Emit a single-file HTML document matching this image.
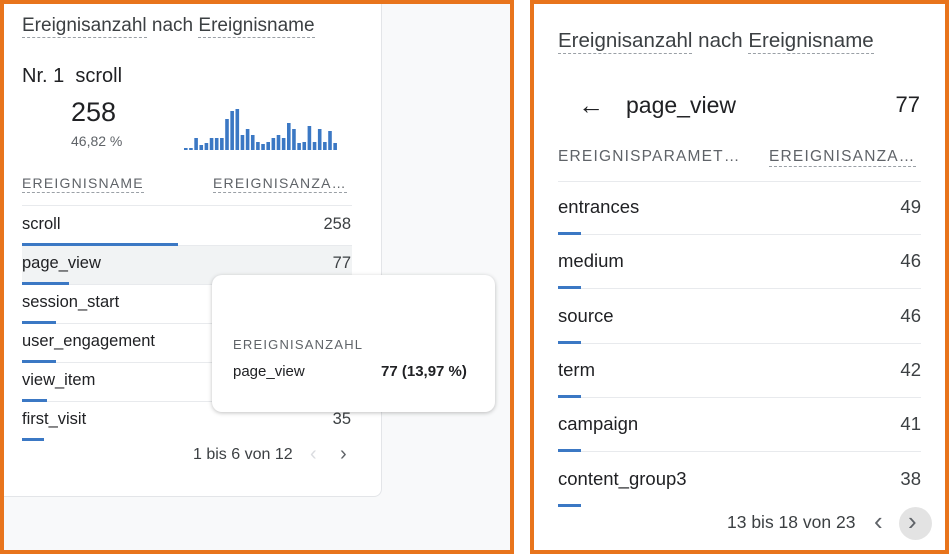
<!DOCTYPE html><html><head><style>
*{margin:0;padding:0;box-sizing:border-box}
body{width:949px;height:554px;background:#fff;font-family:"Liberation Sans",sans-serif;color:#202124;position:relative;overflow:hidden}
.a{position:absolute;white-space:nowrap}
.dash{border-bottom:1px dashed #9aa0a6;padding-bottom:1px}
.hd{font-size:14px;letter-spacing:1.2px;color:#5f6368}
.r{font-size:16.5px;color:#202124}
.n{font-size:16.5px;color:#3c4043;text-align:right}
.bar{position:absolute;height:3px;background:#3b78c4;z-index:2}
.sep{position:absolute;height:1px;background:#e8eaed}
</style></head><body>
<div class="a" style="left:0;top:0;width:514px;height:554px;background:#f8f9fa;border:4px solid #e8741c"></div>
<div class="a" style="left:4px;top:4px;width:378px;height:493px;background:#fff;border:1px solid #e3e5e8;border-top:none;border-left:none;border-radius:0 0 8px 0"></div>
<div class="a" style="left:22px;top:15px;font-size:19px;color:#3c4043"><span class="dash">Ereignisanzahl</span> nach <span class="dash">Ereignisname</span></div>
<div class="a" style="left:22px;top:65px;font-size:20px">Nr. 1&nbsp; scroll</div>
<div class="a" style="left:71px;top:97px;font-size:27px">258</div>
<div class="a" style="left:71px;top:133px;font-size:14px;color:#5f6368">46,82 %</div>
<svg class="a" style="left:184px;top:100px" width="156" height="52" id="sp"></svg>
<div class="a hd" style="left:22px;top:175px"><span class="dash">EREIGNISNAME</span></div>
<div class="a hd" style="left:213px;top:175px"><span class="dash">EREIGNISANZA…</span></div>
<div class="sep" style="left:22px;top:205px;width:330px"></div>
<div class="a" style="left:22px;top:245px;width:330px;height:39px;background:#f1f3f4"></div>
<div class="a r" style="left:22px;top:215px">scroll</div><div class="a n" style="left:300px;top:215px;width:51px">258</div><div class="bar" style="left:22px;top:243px;width:156px"></div>
<div class="sep" style="left:22px;top:245px;width:330px"></div>
<div class="a r" style="left:22px;top:254px">page_view</div><div class="a n" style="left:300px;top:254px;width:51px">77</div><div class="bar" style="left:22px;top:282px;width:47px"></div>
<div class="sep" style="left:22px;top:284px;width:330px"></div>
<div class="a r" style="left:22px;top:293px">session_start</div><div class="bar" style="left:22px;top:321px;width:34px"></div>
<div class="sep" style="left:22px;top:323px;width:330px"></div>
<div class="a r" style="left:22px;top:332px">user_engagement</div><div class="bar" style="left:22px;top:360px;width:34px"></div>
<div class="sep" style="left:22px;top:362px;width:330px"></div>
<div class="a r" style="left:22px;top:371px">view_item</div><div class="bar" style="left:22px;top:399px;width:25px"></div>
<div class="sep" style="left:22px;top:401px;width:330px"></div>
<div class="a r" style="left:22px;top:410px">first_visit</div><div class="a n" style="left:300px;top:410px;width:51px">35</div><div class="bar" style="left:22px;top:438px;width:22px"></div>
<div class="a" style="left:193px;top:446px;font-size:16px;color:#3c4043">1 bis 6 von 12</div>
<div class="a" style="left:310px;top:443px;font-size:20px;color:#dadce0">&#8249;</div>
<div class="a" style="left:340px;top:443px;font-size:20px;color:#5f6368">&#8250;</div>
<div class="a" style="left:212px;top:275px;width:283px;height:137px;background:#fff;border-radius:10px;box-shadow:0 1px 4px rgba(0,0,0,.25);z-index:3"></div>
<div class="a hd" style="left:233px;top:337px;font-size:13px;z-index:4">EREIGNISANZAHL</div>
<div class="a" style="left:233px;top:363px;font-size:15px;z-index:4">page_view</div>
<div class="a" style="left:381px;top:363px;font-size:15px;font-weight:bold;z-index:4">77 (13,97 %)</div>
<div class="a" style="left:530px;top:0;width:419px;height:554px;border:4px solid #e8741c"></div>
<div class="a" style="left:558px;top:29px;font-size:20.5px;color:#3c4043"><span class="dash">Ereignisanzahl</span> nach <span class="dash">Ereignisname</span></div>
<div class="a" style="left:578px;top:90px;font-size:26px;line-height:30px">&#8592;</div>
<div class="a" style="left:626px;top:92px;font-size:23px">page_view</div>
<div class="a" style="left:870px;top:92px;font-size:22px;width:50px;text-align:right">77</div>
<div class="a hd" style="left:558px;top:148px;font-size:15.5px">EREIGNISPARAMET…</div>
<div class="a hd" style="left:769px;top:148px;font-size:15.5px"><span class="dash">EREIGNISANZA…</span></div>
<div class="sep" style="left:558px;top:181px;width:363px"></div>
<div id="rr"></div>
<div class="a" style="left:727px;top:512px;font-size:17.5px;color:#3c4043">13 bis 18 von 23</div>
<div class="a" style="left:874px;top:506px;font-size:26px;color:#5f6368">&#8249;</div>
<div class="a" style="left:899px;top:507px;width:33px;height:33px;border-radius:50%;background:#e3e3e3"></div>
<div class="a" style="left:908px;top:506px;font-size:26px;color:#5f6368">&#8250;</div>
<script>
var h=[2,2,12,5,7,12,12,12,31,39,41,15,21,15,8,6,8,12,15,12,27,21,7,8,24,8,21,8,19,7],s='';
h.forEach(function(v,i){s+='<rect x="'+(i*5.15)+'" y="'+(50-v)+'" width="3.6" height="'+v+'" fill="#3b78c4"/>'});
document.getElementById('sp').innerHTML=s;
var d=[['entrances',49],['medium',46],['source',46],['term',42],['campaign',41],['content_group3',38]],o='';
d.forEach(function(e,i){var t=Math.round(196+i*54.3);
o+='<div class="a" style="left:558px;top:'+t+'px;font-size:18.5px">'+e[0]+'</div><div class="a n" style="left:860px;top:'+t+'px;width:61px;font-size:18.5px">'+e[1]+'</div>';
if(i<5)o+='<div class="sep" style="left:558px;top:'+(t+38)+'px;width:363px"></div>';
o+='<div class="bar" style="left:558px;top:'+(t+36)+'px;width:23px"></div>';});
document.getElementById('rr').innerHTML=o;
</script>
</body></html>
